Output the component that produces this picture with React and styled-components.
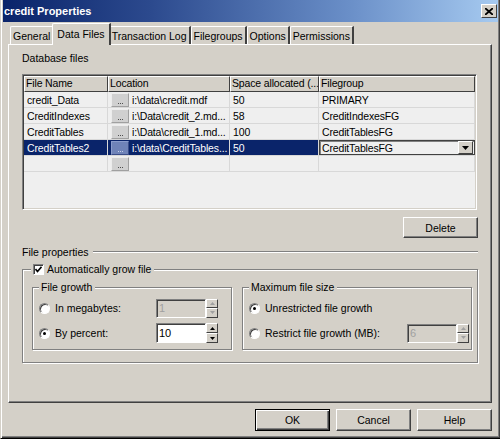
import React from "react";
import styled, { createGlobalStyle, css } from "styled-components";

const Global = createGlobalStyle`
  html, body { margin: 0; padding: 0; background: #d4d0c8; }
  body { font-family: "Liberation Sans", Arial, sans-serif; font-size: 10.5px; color: #000; }
  * { box-sizing: border-box; }
`;

const Window = styled.div`
  width: 500px;
  height: 439px;
  background: #d4d0c8;
  border-left: 1px solid #d4d0c8;
  box-shadow: inset 1px 0 0 #fff, inset -1px 0 0 #404040, inset 0 -1px 0 #404040, inset -2px 0 0 #808080, inset 0 -2px 0 #808080;
  padding: 0 3px 3px 3px;
  display: flex;
  flex-direction: column;
  border-bottom: 1px solid #000;
`;

const TitleBar = styled.div`
  height: 22px;
  margin: 0 -1px;
  background: linear-gradient(90deg, #0a246a 0%, #2c4a8e 30%, #6a8fc8 70%, #a6caf0 100%);
  display: flex;
  align-items: center;
  justify-content: space-between;
  padding: 0 1px 0 1px;
`;

const Title = styled.span`
  color: #fff;
  font-weight: bold;
  font-size: 11px;
`;

const CloseBtn = styled.div`
  width: 16px;
  height: 14px;
  background: #d4d0c8;
  border: 1px solid;
  border-color: #fff #404040 #404040 #fff;
  display: flex;
  align-items: center;
  justify-content: center;
`;

const TabStrip = styled.div`
  display: flex;
  align-items: flex-end;
  height: 22px;
  padding-left: 6px;
  position: relative;
  z-index: 1;
`;

const Tab = styled.div`
  height: 18px;
  padding: 0 2px 0 2px;
  display: flex;
  align-items: center;
  border-left: 1px solid #fff;
  border-top: 1px solid #fff;
  border-right: 2px solid #404040;
  border-top-left-radius: 2px;
  background: #d4d0c8;
  position: relative;
  ${p => p.$active && css`
    z-index: 2;
    height: 22px;
    padding: 0 4px 2px 4px;
    margin: 0 -2px -1px -2px;
  `}
`;

const Panel = styled.div`
  width: 484px;
  height: 359px;
  margin-left: 4px;
  border: 1px solid;
  border-color: #fff #404040 #404040 #fff;
  box-shadow: inset -1px -1px 0 #808080;
  padding: 6px 13px 0 13px;
  display: flex;
  flex-direction: column;
`;

const Label = styled.div`
  height: 14px;
  line-height: 14px;
`;

const Grid = styled.div`
  margin-top: 9px;
  width: 455px;
  height: 136px;
  border: 1px solid;
  border-color: #808080 #fff #fff #808080;
  box-shadow: inset 1px 1px 0 #404040, inset -1px -1px 0 #d4d0c8;
  background: #efefef;
  padding: 1px;
  overflow: hidden;
  letter-spacing: -0.15px;
`;

const Row = styled.div`
  display: grid;
  grid-template-columns: 84px 122px 89px 1fr;
  height: 16px;
  border-bottom: 1px solid #d8d8d8;
  background: ${p => (p.$selected ? "#0a246a" : "transparent")};
  color: ${p => (p.$selected ? "#fff" : "#000")};
`;

const HeaderRow = styled(Row)`
  background: #d4d0c8;
  border-bottom: none;
`;

const HeadCell = styled.div`
  border: 1px solid;
  border-color: #fff #404040 #404040 #fff;
  padding: 0 1px;
  line-height: 13px;
  white-space: nowrap;
  overflow: hidden;
`;

const Cell = styled.div`
  border-right: 1px solid #d8d8d8;
  padding: 0 3px;
  white-space: nowrap;
  overflow: hidden;
  display: flex;
  align-items: center;
  gap: 3px;
  ${p => p.$tight && css`padding: 0 0 0 2px; gap: 2px;`}
  ${p => p.$combo && css`
    background: #efefef;
    color: #000;
    border: 1px solid #404040;
    box-shadow: inset 1px 1px 0 #808080;
    justify-content: space-between;
    padding: 0 1px 0 2px;
  `}
`;

const DotsBtn = styled.span`
  width: 18px;
  height: 14px;
  flex: none;
  margin: 0 1px;
  background: ${p => (p.$selected ? "#6f83b8" : "#d0d0d0")};
  border: 1px solid;
  border-color: ${p => (p.$selected ? "#8a9ccc #3a4d88 #3a4d88 #8a9ccc" : "#ececec #a0a0a0 #a0a0a0 #ececec")};
  display: flex;
  align-items: flex-end;
  justify-content: center;
  padding-bottom: 2px;
  gap: 1px;
`;

const Dot = styled.i`
  width: 1px;
  height: 1px;
  background: ${p => (p.$selected ? "#c8d0e8" : "#505050")};
`;

const DropBtn = styled.span`
  width: 15px;
  height: 13px;
  background: #d4d0c8;
  border: 1px solid;
  border-color: #fff #404040 #404040 #fff;
  display: flex;
  align-items: center;
  justify-content: center;
`;

const ButtonRow = styled.div`
  display: flex;
  justify-content: flex-end;
  gap: 6px;
  ${p => p.$panel && css`margin-top: 7px;`}
  ${p => p.$footer && css`padding: 6px 5px 0 0;`}
`;

const Button = styled.div`
  width: 75px;
  height: ${p => (p.$h || 22)}px;
  background: #d4d0c8;
  border: 1px solid;
  border-color: ${p => (p.$default ? "#000" : "#fff #404040 #404040 #fff")};
  box-shadow: ${p => (p.$default ? "inset 1px 1px 0 #fff, inset -1px -1px 0 #404040, inset -2px -2px 0 #808080" : "inset -1px -1px 0 #808080")};
  display: flex;
  align-items: center;
  justify-content: center;
`;

const Section = styled.div`
  display: flex;
  align-items: center;
  margin-top: 7px;
  height: 14px;
  gap: 4px;
`;

const Rule = styled.div`
  flex: 1;
  height: 2px;
  border-top: 1px solid #808080;
  border-bottom: 1px solid #fff;
`;

const Group = styled.div`
  position: relative;
  border: 1px solid #808080;
  box-shadow: 1px 1px 0 #fff, inset 1px 1px 0 #fff;
  ${p => p.$outer && css`
    margin-top: 10px;
    width: 456px;
    height: 94px;
    padding: 17px 5px 0 9px;
    display: flex;
    gap: 10px;
  `}
  ${p => p.$inner && css`
    width: ${p.$w}px;
    height: 63px;
    padding: 10px 0 0 6px;
    display: flex;
    flex-direction: column;
    gap: 5px;
  `}
`;

const Legend = styled.div`
  position: absolute;
  top: -8px;
  left: ${p => p.$left}px;
  background: #d4d0c8;
  padding: 0 3px 0 2px;
  height: 14px;
  display: flex;
  align-items: center;
  gap: 3px;
`;

const Check = styled.span`
  width: 11px;
  height: 11px;
  background: #fff;
  border: 1px solid;
  border-color: #808080 #fff #fff #808080;
  box-shadow: inset 1px 1px 0 #404040;
  display: flex;
  align-items: center;
  justify-content: center;
`;

const OptionRow = styled.div`
  display: flex;
  align-items: center;
  height: 20px;
`;

const Radio = styled.span`
  width: 11px;
  height: 11px;
  border-radius: 50%;
  flex: none;
  background: #fff;
  border: 1px solid;
  border-color: #808080 #fff #fff #808080;
  box-shadow: inset 1px 1px 0 #404040;
  display: flex;
  align-items: center;
  justify-content: center;
  margin-right: 5px;
  &::after {
    content: "";
    width: 3px;
    height: 3px;
    border-radius: 50%;
    background: ${p => (p.$on ? "#000" : "transparent")};
  }
`;

const OptionText = styled.span`
  width: ${p => p.$w}px;
`;

const Spinner = styled.div`
  display: flex;
  height: ${p => (p.$big ? 20 : 19)}px;
`;

const SpinInput = styled.div`
  width: 50px;
  height: 100%;
  background: ${p => (p.$disabled ? "#d4d0c8" : "#fff")};
  color: ${p => (p.$disabled ? "#a0a0a0" : "#000")};
  border: 1px solid;
  border-color: #808080 #fff #fff #808080;
  box-shadow: inset 1px 1px 0 #404040;
  padding: 0 2px;
  display: flex;
  align-items: center;
  font-size: 11px;
`;

const SpinCol = styled.div`
  display: flex;
  flex-direction: column;
  width: 12px;
  height: 100%;
`;

const SpinBtn = styled.div`
  flex: 1;
  background: #d4d0c8;
  border: 1px solid;
  border-color: #fff #404040 #404040 #fff;
  display: flex;
  align-items: center;
  justify-content: center;
`;

const Arrow = ({ up, disabled }) => (
  <svg width="5" height="3" viewBox="0 0 5 3">
    <path d={up ? "M2.5 0 L5 3 L0 3 Z" : "M0 0 L5 0 L2.5 3 Z"} fill={disabled ? "#a0a0a0" : "#000"} />
  </svg>
);

const SpinBox = ({ value, disabled, big }) => (
  <Spinner $big={big}>
    <SpinInput $disabled={disabled}>{value}</SpinInput>
    <SpinCol>
      <SpinBtn><Arrow up disabled={disabled} /></SpinBtn>
      <SpinBtn><Arrow disabled={disabled} /></SpinBtn>
    </SpinCol>
  </Spinner>
);

const rows = [
  ["credit_Data", "i:\\data\\credit.mdf", "50", "PRIMARY"],
  ["CreditIndexes", "i:\\Data\\credit_2.md...", "58", "CreditIndexesFG"],
  ["CreditTables", "i:\\Data\\credit_1.md...", "100", "CreditTablesFG"],
  ["CreditTables2", "i:\\data\\CreditTables...", "50", "CreditTablesFG"],
  ["", "", "", ""],
];

const tabs = ["General", "Data Files", "Transaction Log", "Filegroups", "Options", "Permissions"];

export default function App() {
  return (
    <>
      <Global />
      <Window>
        <TitleBar>
          <Title>credit Properties</Title>
          <CloseBtn>
            <svg width="8" height="7" viewBox="0 0 8 7">
              <path d="M0 0 L8 7 M8 0 L0 7" stroke="#000" strokeWidth="1.8" />
            </svg>
          </CloseBtn>
        </TitleBar>
        <TabStrip>
          {tabs.map(t => (
            <Tab key={t} $active={t === "Data Files"}>{t}</Tab>
          ))}
        </TabStrip>
        <Panel>
          <Label>Database files</Label>
          <Grid>
            <HeaderRow>
              <HeadCell>File Name</HeadCell>
              <HeadCell>Location</HeadCell>
              <HeadCell>Space allocated (...</HeadCell>
              <HeadCell>Filegroup</HeadCell>
            </HeaderRow>
            {rows.map((r, i) => {
              const sel = i === 3;
              return (
                <Row key={i} $selected={sel}>
                  <Cell>{r[0]}</Cell>
                  <Cell $tight>
                    <DotsBtn $selected={sel}>
                      <Dot $selected={sel} /><Dot $selected={sel} /><Dot $selected={sel} />
                    </DotsBtn>
                    {r[1]}
                  </Cell>
                  <Cell>{r[2]}</Cell>
                  {sel ? (
                    <Cell $combo>
                      {r[3]}
                      <DropBtn>
                        <svg width="7" height="4" viewBox="0 0 7 4"><path d="M0 0 L7 0 L3.5 4 Z" fill="#000" /></svg>
                      </DropBtn>
                    </Cell>
                  ) : (
                    <Cell>{r[3]}</Cell>
                  )}
                </Row>
              );
            })}
          </Grid>
          <ButtonRow $panel>
            <Button $h={21}>Delete</Button>
          </ButtonRow>
          <Section>
            <span>File properties</span>
            <Rule />
          </Section>
          <Group $outer>
            <Legend $left={8}>
              <Check>
                <svg width="7" height="7" viewBox="0 0 7 7"><path d="M0.5 3 L2.5 5.5 L6.5 0.8" stroke="#000" strokeWidth="1.6" fill="none" /></svg>
              </Check>
              Automatically grow file
            </Legend>
            <Group $inner $w={200}>
              <Legend $left={6}>File growth</Legend>
              <OptionRow>
                <Radio />
                <OptionText $w={101}>In megabytes:</OptionText>
                <SpinBox value="1" disabled />
              </OptionRow>
              <OptionRow>
                <Radio $on />
                <OptionText $w={101}>By percent:</OptionText>
                <SpinBox value="10" big />
              </OptionRow>
            </Group>
            <Group $inner $w={230}>
              <Legend $left={6}>Maximum file size</Legend>
              <OptionRow>
                <Radio $on />
                <OptionText $w={142}>Unrestricted file growth</OptionText>
              </OptionRow>
              <OptionRow>
                <Radio />
                <OptionText $w={142}>Restrict file growth (MB):</OptionText>
                <SpinBox value="6" disabled />
              </OptionRow>
            </Group>
          </Group>
        </Panel>
        <ButtonRow $footer>
          <Button $default>OK</Button>
          <Button>Cancel</Button>
          <Button>Help</Button>
        </ButtonRow>
      </Window>
    </>
  );
}
